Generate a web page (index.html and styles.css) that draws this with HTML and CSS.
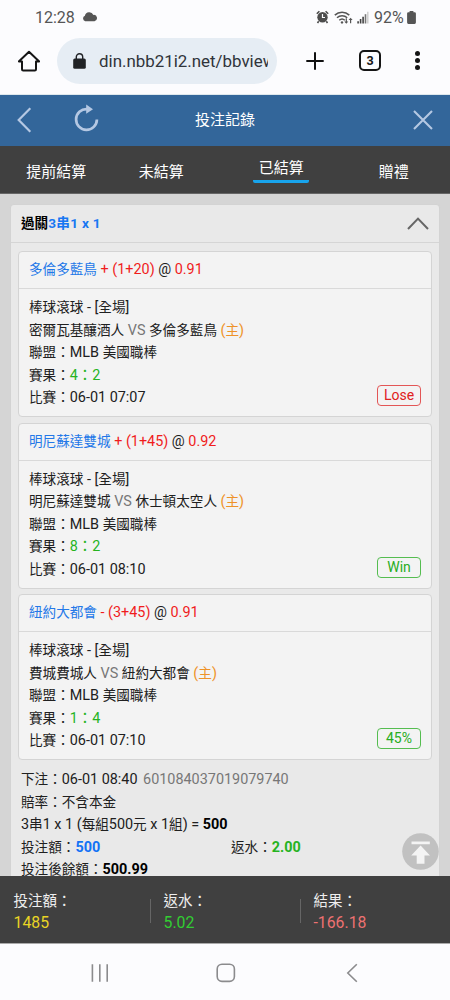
FILE: index.html
```html
<!DOCTYPE html>
<html lang="zh-Hant">
<head>
<meta charset="utf-8">
<title>投注記錄</title>
<link rel="stylesheet" href="styles.css">
</head>
<body>
<div class="phone">
  <div class="status">
    <span class="clock">12:28</span>
    <svg class="cloud" width="16" height="10" viewBox="0 0 16 10"><path d="M3.2 9.2A2.9 2.9 0 0 1 2.9 3.7 4.5 4.5 0 0 1 11.4 2.9 3.2 3.2 0 0 1 12.5 9.2Z" fill="#555"/></svg>
    <span class="grow"></span>
    <svg class="alarm" width="13" height="14" viewBox="0 0 13 14"><circle cx="6.5" cy="7.2" r="5.2" fill="#4d4d4d"/><path d="M.8 3.8 3.4 1.2M12.2 3.8 9.6 1.2M2.7 11.3 1.5 13M10.3 11.3l1.2 1.7" stroke="#4d4d4d" stroke-width="1.6"/><path d="M6.5 4v3.5H9" fill="none" stroke="#fcfcfe" stroke-width="1.2"/></svg>
    <svg class="wifi" width="19" height="15" viewBox="0 0 19 15"><g fill="none" stroke="#555" stroke-width="1.5"><path d="M.8 5.1a10.6 10.6 0 0 1 14.5 0M3 7.8a7.4 7.4 0 0 1 10.2 0M5.3 10.3a4 4 0 0 1 5.5 0"/></g><circle cx="8" cy="12.4" r="1.2" fill="#555"/><path d="M12.3 8.2v4.3M16.6 13.3V9" stroke="#555" stroke-width="1.2"/><path d="m10.3 11.5 2 2.3 2-2.3zM14.6 10l2-2.3 2 2.3z" fill="#555"/></svg>
    <svg class="signal" width="12" height="13" viewBox="0 0 12 13"><path d="M1.1 12.5v-2.2M3.6 12.5V8M6.1 12.5V5.7" stroke="#444" stroke-width="1.6"/><path d="M8.5 12.5V3.2" stroke="#777" stroke-width="1.6"/><path d="M10.8 12.5V.7" stroke="#ccc" stroke-width="1.4"/></svg>
    <span class="percent">92%</span>
    <svg class="battery" width="9" height="13" viewBox="0 0 9 13"><path d="M2.6 0h3.8v1.3h1.2A1.3 1.3 0 0 1 8.9 2.6v9A1.3 1.3 0 0 1 7.6 12.9H1.4A1.3 1.3 0 0 1 .1 11.6v-9a1.3 1.3 0 0 1 1.3-1.3h1.2z" fill="#555"/></svg>
  </div>
  <div class="browser">
    <svg class="home" width="22" height="22" viewBox="0 0 22 22"><path d="M.8 11.4H4v7.8q0 1.2 1.2 1.2h11.6q1.2 0 1.2-1.2v-7.8h3.2L11 1.8Z" fill="none" stroke="#151515" stroke-width="2" stroke-linejoin="round"/></svg>
    <div class="address">
      <svg width="13" height="16" viewBox="0 0 13 16"><rect x=".2" y="5.4" width="12.6" height="10.4" rx="1.6" fill="#202225"/><path d="M3.3 6V4a3.2 3.2 0 0 1 6.4 0v2" fill="none" stroke="#202225" stroke-width="1.4"/></svg>
      <span class="url">din.nbb21i2.net/bbview</span>
    </div>
    <svg class="plus" width="18" height="18" viewBox="0 0 18 18"><path d="M9 .3v17.4M.3 9h17.4" stroke="#111" stroke-width="2"/></svg>
    <div class="tabcount">3</div>
    <svg class="dots" width="5" height="19" viewBox="0 0 5 19"><g fill="#151515"><circle cx="2.5" cy="2.5" r="2.5"/><circle cx="2.5" cy="9.5" r="2.5"/><circle cx="2.5" cy="16.5" r="2.5"/></g></svg>
  </div>
  <header class="appbar">
    <div class="left">
      <svg width="15" height="26" viewBox="0 0 15 26"><path d="M13.3 1.3 1.7 13l11.6 11.7" fill="none" stroke="#b5c8e3" stroke-width="2.2"/></svg>
      <svg width="25" height="28" viewBox="0 0 25 28"><path d="M13 5.1A10.4 10.4 0 1 0 22.9 15.5" fill="none" stroke="#b5c8e3" stroke-width="2.7"/><path d="M12.2.6v9.2l6.8-4.5z" fill="#b5c8e3"/></svg>
    </div>
    <h1>投注記錄</h1>
    <svg class="close" width="20" height="20" viewBox="0 0 20 20"><path d="m1 1 18 18M19 1 1 19" stroke="#b5c8e3" stroke-width="2.1"/></svg>
  </header>
  <nav class="tabs">
    <span>提前結算</span>
    <span class="open">未結算</span>
    <span class="active">已結算</span>
    <span>贈禮</span>
  </nav>
  <main>
    <section class="card">
      <div class="cardhead"><b>過關<i>3串1 x 1</i></b><svg width="22" height="13" viewBox="0 0 22 13"><path d="M1 12 11 1.6 21 12" fill="none" stroke="#666" stroke-width="2"/></svg></div>
      <div class="legs">
        <article class="leg">
          <h2><span class="blue">多倫多藍鳥</span><span class="n"> <span class="red">+ (1+20)</span> @ <span class="red">0.91</span></span></h2>
          <div class="info">
            <p>棒球滾球<span class="n"> - [</span>全場<span class="n">]</span></p>
            <p>密爾瓦基釀酒人<span class="n vs"> VS </span>多倫多藍鳥<span class="n orange"> (</span><span class="orange">主</span><span class="n orange">)</span></p>
            <p>聯盟：<span class="n">MLB </span>美國職棒</p>
            <p>賽果：<span class="green n">4：2</span></p>
            <p class="last"><span>比賽：<span class="n">06-01 07:07</span></span><span class="tag lose">Lose</span></p>
          </div>
        </article>
        <article class="leg">
          <h2><span class="blue">明尼蘇達雙城</span><span class="n"> <span class="red">+ (1+45)</span> @ <span class="red">0.92</span></span></h2>
          <div class="info">
            <p>棒球滾球<span class="n"> - [</span>全場<span class="n">]</span></p>
            <p>明尼蘇達雙城<span class="n vs"> VS </span>休士頓太空人<span class="n orange"> (</span><span class="orange">主</span><span class="n orange">)</span></p>
            <p>聯盟：<span class="n">MLB </span>美國職棒</p>
            <p>賽果：<span class="green n">8：2</span></p>
            <p class="last"><span>比賽：<span class="n">06-01 08:10</span></span><span class="tag">Win</span></p>
          </div>
        </article>
        <article class="leg">
          <h2><span class="blue">紐約大都會</span><span class="n"> <span class="red">- (3+45)</span> @ <span class="red">0.91</span></span></h2>
          <div class="info">
            <p>棒球滾球<span class="n"> - [</span>全場<span class="n">]</span></p>
            <p>費城費城人<span class="n vs"> VS </span>紐約大都會<span class="n orange"> (</span><span class="orange">主</span><span class="n orange">)</span></p>
            <p>聯盟：<span class="n">MLB </span>美國職棒</p>
            <p>賽果：<span class="green n">1：4</span></p>
            <p class="last"><span>比賽：<span class="n">06-01 07:10</span></span><span class="tag">45%</span></p>
          </div>
        </article>
      </div>
      <div class="summary">
        <p>下注：<span class="n">06-01 08:40 <span class="serial">601084037019079740</span></span></p>
        <p>賠率：不含本金</p>
        <p><span class="n">3</span>串<span class="n">1 x 1 (</span>每組<span class="n">500</span>元<span class="n"> x 1</span>組<span class="n">) = <b>500</b></span></p>
        <p class="pair"><span>投注額：<b class="blue2 n">500</b></span><span>返水：<b class="green n">2.00</b></span></p>
        <p>投注後餘額：<b class="n">500.99</b></p>
      </div>
    </section>
    <div class="totop"><svg width="37" height="37" viewBox="0 0 37 37"><circle cx="18.5" cy="18.5" r="18.3" fill="#c1c1c1"/><path d="M9.5 8.6h18.3v2.6H9.5zM18.6 12.6l9.4 9.8h-5.5v8.3h-7.8v-8.3H9.2z" fill="#f4f4f4"/></svg></div>
  </main>
  <footer class="totals">
    <div><span>投注額：</span><strong class="yellow">1485</strong></div>
    <div><span>返水：</span><strong class="lime">5.02</strong></div>
    <div><span>結果：</span><strong class="pink">-166.18</strong></div>
  </footer>
  <div class="softkeys">
    <svg width="18" height="18" viewBox="0 0 18 18"><path d="M1.4.2v17.6M8.8.2v17.6M16.2.2v17.6" stroke="#8b8b8d" stroke-width="1.6"/></svg>
    <svg width="20" height="20" viewBox="0 0 20 20"><rect x="1.2" y="1.2" width="17.2" height="17.2" rx="4.8" fill="none" stroke="#8b8b8d" stroke-width="1.6"/></svg>
    <svg width="12" height="20" viewBox="0 0 12 20"><path d="M10.8 1.2 1.8 10l9 8.8" fill="none" stroke="#8b8b8d" stroke-width="1.6"/></svg>
  </div>
</div>
</body>
</html>
```
FILE: styles.css
```css
* { box-sizing: border-box; margin: 0; padding: 0; }
body { font-family: Roboto, "Noto Sans CJK TC", sans-serif; background: #fcfcfe; color: #202020; }
svg { display: block; flex: none; }
.phone { width: 450px; height: 1000px; display: flex; flex-direction: column; overflow: hidden; }
.status { height: 34px; flex: none; display: flex; align-items: center; padding: 0 34px 0 35px; font-size: 16px; color: #555; }
.clock { width: 41px; }
.cloud { margin-left: 6px; }
.grow { flex: 1; }
.wifi { margin-left: 5px; }
.signal { margin-left: 4px; }
.percent { margin-left: 5px; width: 32px; }
.battery { margin-left: 1px; }
.browser { height: 61px; flex: none; display: flex; align-items: center; padding: 0 30px 7px 18px; border-bottom: 1px solid #dfe8ed; }
.address { flex: none; margin-left: 17px; width: 220px; height: 46px; border-radius: 23px; background: #e6edf4; display: flex; align-items: center; padding-left: 16px; gap: 13px; }
.url { font-size: 16.9px; width: 169px; overflow: hidden; white-space: nowrap; line-height: 24px; color: #30343a; }
.plus { margin-left: 29px; }
.tabcount { flex: none; margin-left: 35px; width: 22px; height: 21px; border: 2px solid #151515; border-radius: 5px; font-size: 12.5px; font-weight: 700; line-height: 17px; text-align: center; color: #151515; }
.dots { margin-left: 34px; }
.appbar { height: 51px; flex: none; background: #33669a; display: grid; grid-template-columns: 1fr auto 1fr; align-items: center; padding: 0 17px 2px; }
.left { display: flex; align-items: center; gap: 42px; }
.left svg:last-child { margin-top: -3px; }
.appbar h1 { font-size: 15px; font-weight: 400; color: #fff; line-height: 22px; }
.close { justify-self: end; }
.tabs { height: 48px; flex: none; background: #404040; display: grid; grid-template-columns: repeat(4, 1fr); color: #fff; font-size: 15px; line-height: 22px; text-align: center; padding-top: 15px; border-bottom: 1px solid #666; }
.open { padding-right: 15px; }
.active { margin: -4px auto 0; width: 56px; height: 26px; border-bottom: 3px solid #18a4ec; border-radius: 0 0 2px 2px; }
main { height: 682px; flex: none; background: #d5d5d5; padding: 11px 11px 0; overflow: hidden; position: relative; }
.card { background: #e9e9e9; border-radius: 3px; box-shadow: 0 0 2px #ccc; height: 690px; font-size: 13.6px; line-height: 22.5px; }
.cardhead { height: 38px; display: flex; align-items: center; justify-content: space-between; padding: 0 10px; border-bottom: 1px solid #d5d5d5; color: #000; }
.cardhead i { font-style: normal; color: #1877f2; letter-spacing: .3px; }
.n { font-size: 14.4px; }
.legs { padding: 8px 7px 0; display: flex; flex-direction: column; gap: 5.5px; }
.leg { height: 166px; background: #f3f3f3; border: 1px solid #d4d4d4; border-radius: 4px; }
.leg h2 { height: 37px; border-bottom: 1px solid #d9d9d9; padding: 6px 10px; font-size: 13.6px; font-weight: 400; line-height: 22.5px; }
.info { padding: 7px 10px 0; }
.info p, .summary p { height: 22.5px; white-space: nowrap; }
.last { display: flex; justify-content: space-between; }
.tag { width: 44px; height: 21px; margin-top: -1px; border: 1px solid #55bd50; border-radius: 4px; color: #28ad22; text-align: center; font-size: 14px; line-height: 18px; }
.lose { color: #e02020; border-color: #e35656; }
.blue { color: #2378e8; }
.red { color: #f01c1c; }
.orange { color: #ee9228; }
.green { color: #26b31f; }
.vs { color: #777; }
.summary { padding: 8px 10px 0; }
.serial { color: #777; margin-left: 2px; }
.summary b { color: #000; }
.summary b.blue2 { color: #1272f5; }
.summary b.green { color: #26b31f; }
.pair { display: grid; grid-template-columns: 1fr 1fr; }
.pair > span + span { padding-left: 6px; }
.totop { position: absolute; right: 11px; bottom: 6px; }
.totals { height: 68px; flex: none; background: #404040; display: grid; grid-template-columns: repeat(3, 1fr); padding-top: 15px; border-bottom: 1px solid #aaa; color: #eee; font-size: 14.5px; line-height: 21px; }
.totals div { padding-left: 13.5px; height: 42px; display: flex; flex-direction: column; background: linear-gradient(#666, #666) left 0 top 8px / 1px 24px no-repeat; }
.totals div:first-child { background: none; }
.totals strong { font-size: 15.8px; font-weight: 400; }
.yellow { color: #e9d425; }
.lime { color: #32cd32; }
.pink { color: #ee7272; }
.softkeys { height: 56px; flex: none; display: flex; align-items: center; padding: 1px 92px 0 91px; justify-content: space-between; }
.softkeys svg:nth-child(2) { margin-right: 4px; }
```
